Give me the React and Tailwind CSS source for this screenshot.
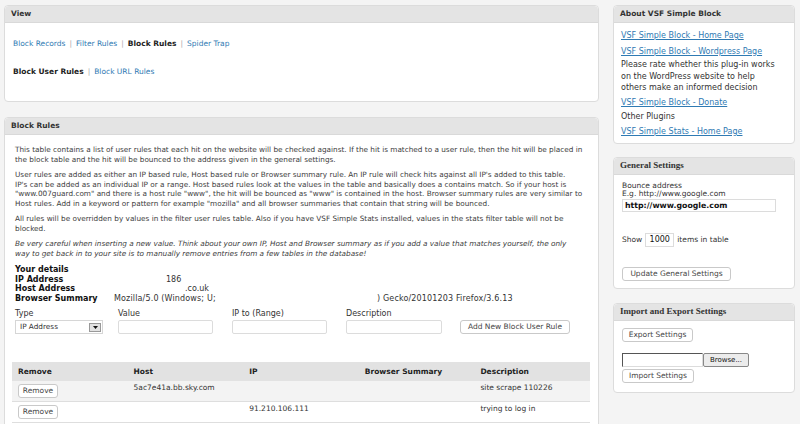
import React from "react";

const link = "text-[#2f7ab3]";

const Box = ({ title, serif, className = "", children }) => (
  <div className={`rounded-[4px] border border-[#dcdcdc] bg-white ${className}`}>
    <div
      className={`flex h-[17px] items-center rounded-t-[4px] border-b border-[#d9d9d9] bg-[#e4e4e4] px-[6px] font-bold text-[#333] ${
        serif ? "font-['Liberation_Serif',serif] text-[9px]" : "text-[7.5px]"
      }`}
    >
      {title}
    </div>
    {children}
  </div>
);

const Btn = ({ children, className = "" }) => (
  <span
    className={`flex h-[14px] items-center justify-center rounded-[3px] border border-[#c9c9c9] bg-white px-[4px] text-[7.5px] text-[#464646] ${className}`}
  >
    {children}
  </span>
);

const Sep = () => <span className="mx-[4px] text-[#aaa]">|</span>;

const rows = [
  { host: "5ac7e41a.bb.sky.com", ip: "", browser: "", desc: "site scrape 110226", shade: true },
  { host: "", ip: "91.210.106.111", browser: "", desc: "trying to log in", shade: false },
];

export default function App() {
  return (
    <div className="h-[424px] w-[800px] overflow-hidden bg-[#f4f4f4] font-['DejaVu_Sans',sans-serif] text-[#333]">
      <div className="flex gap-[14px] pl-[4px] pt-[5px]">
        {/* main column */}
        <div className="w-[595px] shrink-0">
          <Box title="View" className="h-[97px]">
            <div className="px-[8px] pt-[16px] text-[7.5px] leading-[10px]">
              <div>
                <span className={link}>Block Records</span>
                <Sep />
                <span className={link}>Filter Rules</span>
                <Sep />
                <span className="font-bold text-[#222]">Block Rules</span>
                <Sep />
                <span className={link}>Spider Trap</span>
              </div>
              <div className="mt-[18px]">
                <span className="font-bold text-[#222]">Block User Rules</span>
                <Sep />
                <span className={link}>Block URL Rules</span>
              </div>
            </div>
          </Box>

          <Box title="Block Rules" className="mt-[15px] h-[360px]">
            <div className="px-[10px] pt-[10px]">
              <div className="whitespace-nowrap text-[7.3px] leading-[9.5px] text-[#3d3d3d]">
                <p>This table contains a list of user rules that each hit on the website will be checked against. If the hit is matched to a user rule, then the hit will be placed in</p>
                <p>the block table and the hit will be bounced to the address given in the general settings.</p>
                <p className="mt-[6px]">User rules are added as either an IP based rule, Host based rule or Browser summary rule. An IP rule will check hits against all IP's added to this table.</p>
                <p>IP's can be added as an individual IP or a range. Host based rules look at the values in the table and basically does a contains match. So if your host is</p>
                <p>"www.007guard.com" and there is a host rule "www", the hit will be bounced as "www" is contained in the host. Browser summary rules are very similar to</p>
                <p>Host rules. Add in a keyword or pattern for example "mozilla" and all browser summaries that contain that string will be bounced.</p>
                <p className="mt-[6px]">All rules will be overridden by values in the filter user rules table. Also if you have VSF Simple Stats installed, values in the stats filter table will not be</p>
                <p>blocked.</p>
                <p className="mt-[6px] italic">Be very careful when inserting a new value. Think about your own IP, Host and Browser summary as if you add a value that matches yourself, the only</p>
                <p className="italic">way to get back in to your site is to manually remove entries from a few tables in the database!</p>
              </div>

              <div className="mt-[7px] grid grid-cols-[99px_1fr] text-[8px] leading-[9.5px]">
                <div className="col-span-2 font-bold text-[#111]">Your details</div>
                <div className="font-bold text-[#111]">IP Address</div>
                <div className="pl-[52px]">186</div>
                <div className="font-bold text-[#111]">Host Address</div>
                <div className="pl-[71px]">.co.uk</div>
                <div className="font-bold text-[#111]">Browser Summary</div>
                <div className="flex tracking-[0.15px]">
                  <span className="w-[263px]">Mozilla/5.0 (Windows; U;</span>
                  <span>) Gecko/20101203 Firefox/3.6.13</span>
                </div>
              </div>

              <div className="mt-[6px] flex text-[8px]">
                <div className="w-[103px]">
                  <div className="leading-[9px]">Type</div>
                  <div className="mt-[2px] flex h-[14px] w-[88px] items-center justify-between border border-[#d6d6d6] bg-white pl-[4px] pr-[1px] text-[7.3px]">
                    <span>IP Address</span>
                    <span className="flex h-[9px] w-[12px] items-center justify-center border border-[#999] bg-[#e2e2e2]">
                      <svg width="5" height="3" viewBox="0 0 5 3">
                        <path d="M0 0h5L2.5 3z" fill="#111" />
                      </svg>
                    </span>
                  </div>
                </div>
                <div className="w-[114px]">
                  <div className="leading-[9px]">Value</div>
                  <div className="mt-[2px] h-[14px] w-[95px] rounded-[2px] border border-[#dcdcdc] bg-white" />
                </div>
                <div className="w-[114px]">
                  <div className="leading-[9px]">IP to (Range)</div>
                  <div className="mt-[2px] h-[14px] w-[95px] rounded-[2px] border border-[#dcdcdc] bg-white" />
                </div>
                <div className="w-[114px]">
                  <div className="leading-[9px]">Description</div>
                  <div className="mt-[2px] h-[14px] w-[96px] rounded-[2px] border border-[#dcdcdc] bg-white" />
                </div>
                <div className="pt-[11px]">
                  <Btn className="w-[110px]">Add New Block User Rule</Btn>
                </div>
              </div>
            </div>

            <div className="ml-[7px] mt-[28px] w-[578px]">
              <div className="grid h-[19px] grid-cols-5 items-center bg-[#e2e2e2] text-[7.5px] font-bold text-[#222]">
                <div className="pl-[6px]">Remove</div>
                <div className="pl-[6px]">Host</div>
                <div className="pl-[6px]">IP</div>
                <div className="pl-[6px]">Browser Summary</div>
                <div className="pl-[6px]">Description</div>
              </div>
              {rows.map((r, i) => (
                <div
                  key={i}
                  className={`grid h-[21px] grid-cols-5 border-b border-[#dedede] text-[7.5px] leading-[10px] text-[#333] ${
                    r.shade ? "bg-[#f3f3f3]" : "bg-white"
                  }`}
                >
                  <div className="pl-[6px] pt-[3px]">
                    <Btn className="w-[40px]">Remove</Btn>
                  </div>
                  <div className="pl-[6px] pt-[2px]">{r.host}</div>
                  <div className="pl-[6px] pt-[2px]">{r.ip}</div>
                  <div className="pl-[6px] pt-[2px]">{r.browser}</div>
                  <div className="pl-[6px] pt-[2px]">{r.desc}</div>
                </div>
              ))}
            </div>
          </Box>
        </div>

        {/* side column */}
        <div className="w-[182px] shrink-0">
          <Box title="About VSF Simple Block" className="h-[139px]">
            <div className="whitespace-nowrap px-[7px] pt-[7px] text-[8px] leading-[11.5px] text-[#333]">
              <div className={`${link} underline`}>VSF Simple Block - Home Page</div>
              <div className={`${link} mt-[4px] underline`}>VSF Simple Block - Wordpress Page</div>
              <div className="mt-[2px]">
                Please rate whether this plug-in works
                <br />
                on the WordPress website to help
                <br />
                others make an informed decision
              </div>
              <div className={`${link} mt-[3px] underline`}>VSF Simple Block - Donate</div>
              <div className="mt-[3px]">Other Plugins</div>
              <div className={`${link} mt-[3px] underline`}>VSF Simple Stats - Home Page</div>
            </div>
          </Box>

          <Box title="General Settings" serif className="mt-[13px] h-[132px]">
            <div className="px-[8px] pt-[7px] text-[7.5px]">
              <div className="leading-[8px]">Bounce address</div>
              <div className="leading-[8px]">E.g. http://www.google.com</div>
              <div className="mt-[1px] flex h-[13px] w-[154px] items-center border border-[#dcdcdc] bg-white px-[2px] text-[7.8px] font-semibold text-[#111]">
                http://www.google.com
              </div>
              <div className="mt-[21px] flex items-center">
                <span>Show</span>
                <span className="mx-[3px] flex h-[14px] w-[29px] items-center justify-center border border-[#dcdcdc] bg-white text-[8px] text-[#111]">
                  1000
                </span>
                <span>items in table</span>
              </div>
              <div className="mt-[20px]">
                <Btn className="w-[109px]">Update General Settings</Btn>
              </div>
            </div>
          </Box>

          <Box title="Import and Export Settings" serif className="mt-[14px] h-[90px]">
            <div className="px-[8px] pt-[7px]">
              <Btn className="w-[71px]">Export Settings</Btn>
              <div className="mt-[11px] flex items-center">
                <span className="h-[14px] w-[81px] border border-[#dcdcdc] border-l-[#555] border-t-[#555] bg-white" />
                <span className="flex h-[14px] w-[46px] items-center justify-center rounded-[2px] border border-[#888] bg-[#ececec] text-[7px] text-[#111]">
                  Browse...
                </span>
              </div>
              <div className="mt-[2px]">
                <Btn className="w-[72px]">Import Settings</Btn>
              </div>
            </div>
          </Box>
        </div>
      </div>
    </div>
  );
}
